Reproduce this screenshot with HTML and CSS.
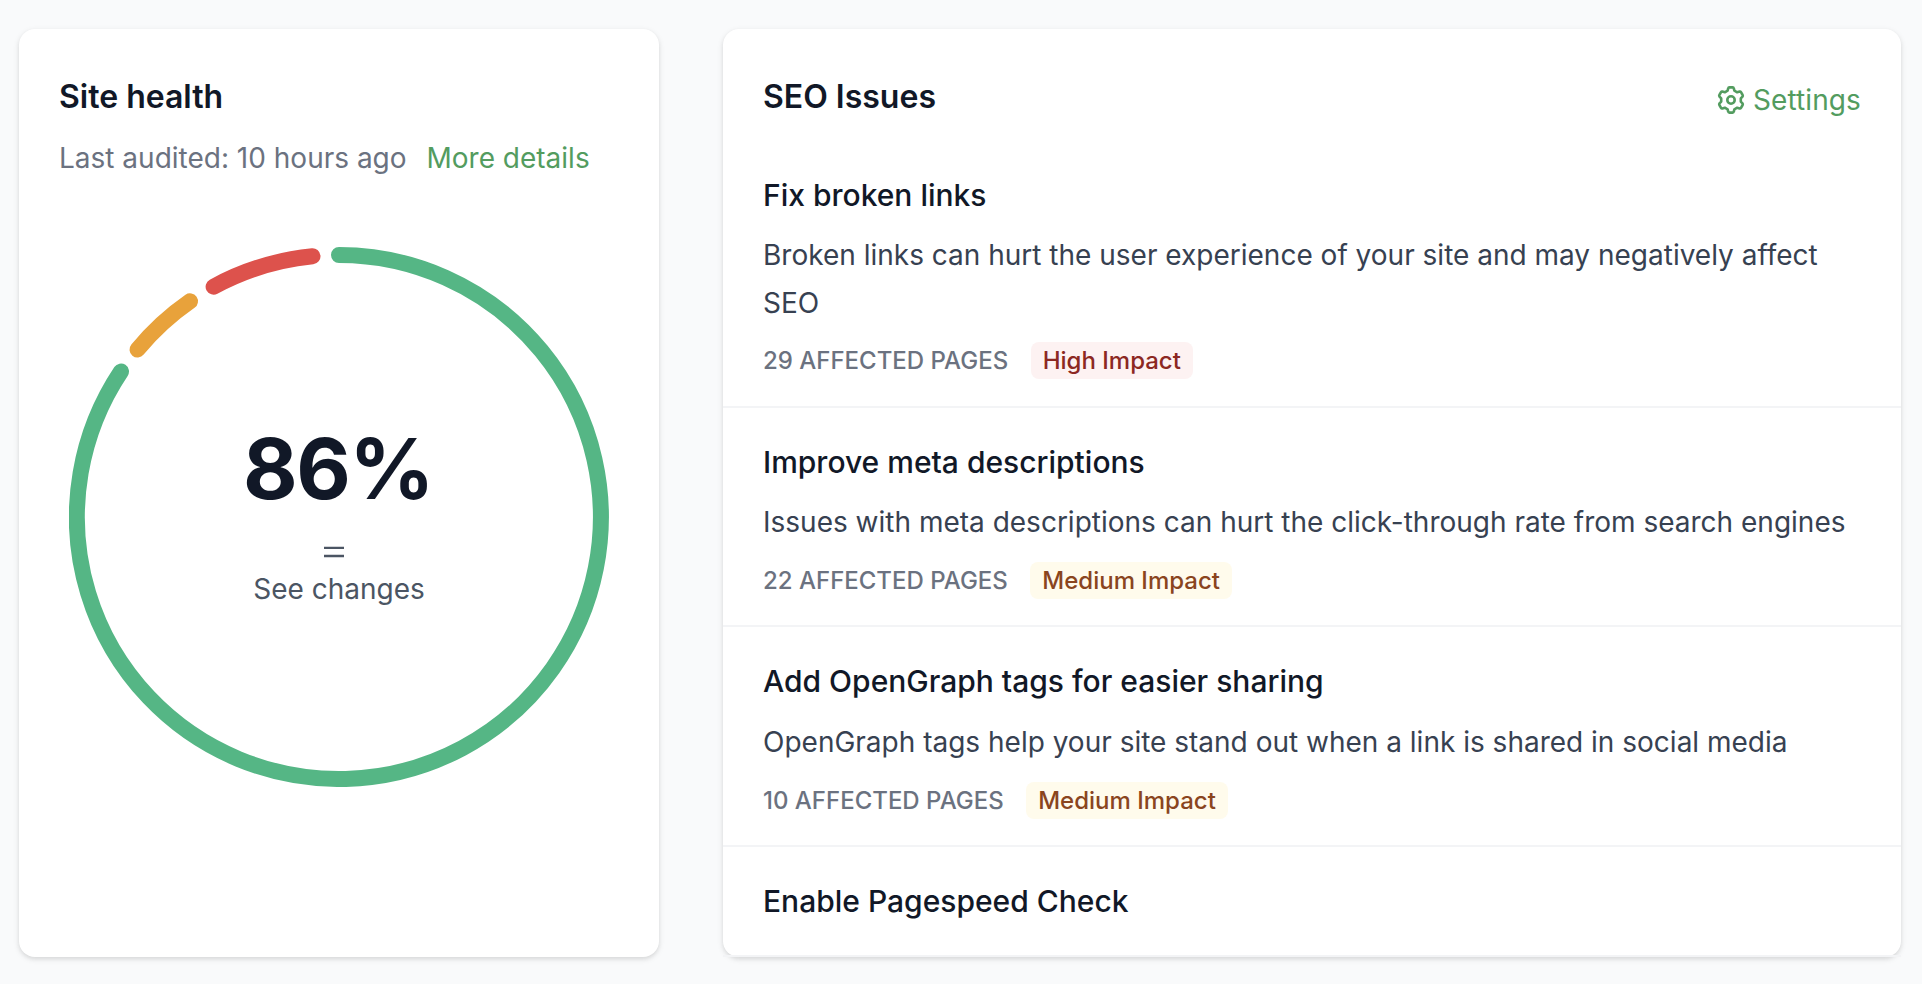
FILE: index.html
```html
<!DOCTYPE html>
<html lang="en">
<head>
    <meta charset="UTF-8">
    <meta name="viewport" content="width=device-width, initial-scale=1.0">
    <title>Site health</title>
    <link rel="stylesheet" href="styles.css">
</head>
<body>
    <div class="container">
        <div class="card health">
            <h2>Site health</h2>
            <p class="audited">Last audited: 10 hours ago <a href="#" class="more">More details</a></p>
            <div class="chart">
                <svg class="ring" viewBox="0 0 540 540">
                    <path class="good" d="M270 8A262 262 0 1 1 52 124.5"/>
                    <path class="warning" d="M68.5 102.5A262 262 0 0 1 121 54.3"/>
                    <path class="error" d="M144.6 39.7A262 262 0 0 1 243.5 9.3"/>
                </svg>
                <div class="score">
                    <div class="percent">86%</div>
                    <svg class="equals" viewBox="0 0 20 12"><path d="M0 1.9h20M0 10h20"/></svg>
                    <a href="#" class="changes">See changes</a>
                </div>
            </div>
        </div>
        <div class="card issues">
            <div class="issues-header">
                <h2>SEO Issues</h2>
                <a href="#" class="settings">
                    <svg class="gear" viewBox="0 0 28 28">
                        <path d="M12.4 1.4h3.2q1 0 1.2 1l.6 2.3 2.8 1.6 2.4-.7q.9-.2 1.4.6l1.6 2.8q.5.9-.1 1.6l-1.7 1.8v3.2l1.7 1.8q.6.7.1 1.6L24 21.8q-.5.8-1.4.6l-2.4-.7-2.8 1.6-.6 2.3q-.2 1-1.2 1h-3.2q-1 0-1.2-1l-.6-2.3-2.8-1.6-2.4.7q-.9.2-1.4-.6L2.4 19q-.5-.9.1-1.6l1.7-1.8v-3.2l-1.7-1.8q-.6-.7-.1-1.6L4 6.2q.5-.8 1.4-.6l2.4.7 2.8-1.6.6-2.3q.2-1 1.2-1z"/>
                        <circle cx="14" cy="14" r="3.7"/>
                    </svg>
                    Settings
                </a>
            </div>
            <div class="issue">
                <h3>Fix broken links</h3>
                <p>Broken links can hurt the user experience of your site and may negatively affect SEO</p>
                <div class="meta"><span class="pages">29 affected pages</span><span class="badge high">High Impact</span></div>
            </div>
            <div class="issue">
                <h3>Improve meta descriptions</h3>
                <p>Issues with meta descriptions can hurt the click-through rate from search engines</p>
                <div class="meta"><span class="pages">22 affected pages</span><span class="badge medium">Medium Impact</span></div>
            </div>
            <div class="issue">
                <h3>Add OpenGraph tags for easier sharing</h3>
                <p>OpenGraph tags help your site stand out when a link is shared in social media</p>
                <div class="meta"><span class="pages">10 affected pages</span><span class="badge medium">Medium Impact</span></div>
            </div>
            <div class="issue last">
                <h3>Enable Pagespeed Check</h3>
            </div>
        </div>
    </div>
</body>
</html>
```
FILE: styles.css
```css
* {
    box-sizing: border-box;
}

body {
    font-family: Inter, sans-serif;
    margin: 0;
    min-height: 100vh;
    background: #f9fafb;
    color: #111827;
    font-size: 28px;
}

h2, h3, p {
    margin: 0;
}

a {
    color: #539c5f;
    text-decoration: none;
}

.container {
    display: flex;
    gap: 64px;
    padding: 29px 21px 27px 19px;
}

.card {
    height: 928px;
    background: #fff;
    border-radius: 16px;
    box-shadow: 0 2px 6px rgba(0, 0, 0, 0.1), 0 2px 4px rgba(0, 0, 0, 0.06);
}

.card h2 {
    font-size: 32px;
    font-weight: 600;
    line-height: 48px;
}

.health {
    width: 640px;
    padding: 44px 40px 0;
}

.audited {
    margin-top: 13px;
    line-height: 48px;
    color: #6b7280;
}

.more {
    margin-left: 12px;
}

.chart {
    display: grid;
    width: 540px;
    height: 540px;
    margin: 65px 0 0 10px;
}

.ring, .score {
    grid-area: 1 / 1;
}

.ring path {
    fill: none;
    stroke-width: 16;
    stroke-linecap: round;
}

.good { stroke: #55b685; }
.warning { stroke: #e8a23b; }
.error { stroke: #dd524c; }

.score {
    display: flex;
    flex-direction: column;
    align-items: center;
    padding-top: 174px;
}

.percent {
    font-size: 84px;
    font-weight: 700;
    line-height: 96px;
    letter-spacing: -0.018em;
    margin-right: 2px;
}

.equals {
    width: 20px;
    height: 12px;
    margin: 29px 10px 0 0;
}

.equals path {
    stroke: #4b5563;
    stroke-width: 2.4;
}

.changes {
    margin-top: 7px;
    line-height: 48px;
    color: #4b5563;
}

.issues {
    flex: 1;
}

.issues-header {
    display: flex;
    justify-content: space-between;
    height: 97px;
    padding: 44px 40px 0;
}

.settings {
    display: flex;
    align-items: center;
    gap: 8px;
    height: 54px;
    letter-spacing: 0.1px;
}

.gear {
    width: 28px;
    height: 28px;
    fill: none;
    stroke: #539c5f;
    stroke-width: 2.6;
    stroke-linejoin: round;
}

.issue {
    height: 219.4px;
    padding: 30px 40px 0;
    border-bottom: 2px solid #f3f4f6;
}

.issues-header + .issue {
    height: 282px;
    padding-top: 44.6px;
}

.issue.last {
    height: 110.2px;
}

.issue h3 {
    font-size: 30px;
    font-weight: 500;
    line-height: 48px;
}

.issue p {
    margin-top: 12.2px;
    line-height: 48px;
    color: #374151;
}

.meta {
    display: flex;
    align-items: center;
    gap: 22.5px;
    margin-top: 16px;
    height: 37px;
    font-size: 24px;
    font-weight: 500;
}

.issues-header + .issue .meta {
    margin-top: 15.5px;
}

.pages {
    color: #6b7280;
    text-transform: uppercase;
}

.badge {
    padding: 0 12px;
    border-radius: 8px;
    line-height: 37px;
}

.high {
    background: #fdf2f2;
    color: #8c2822;
}

.medium {
    background: #fffbec;
    color: #8a451e;
}
```
